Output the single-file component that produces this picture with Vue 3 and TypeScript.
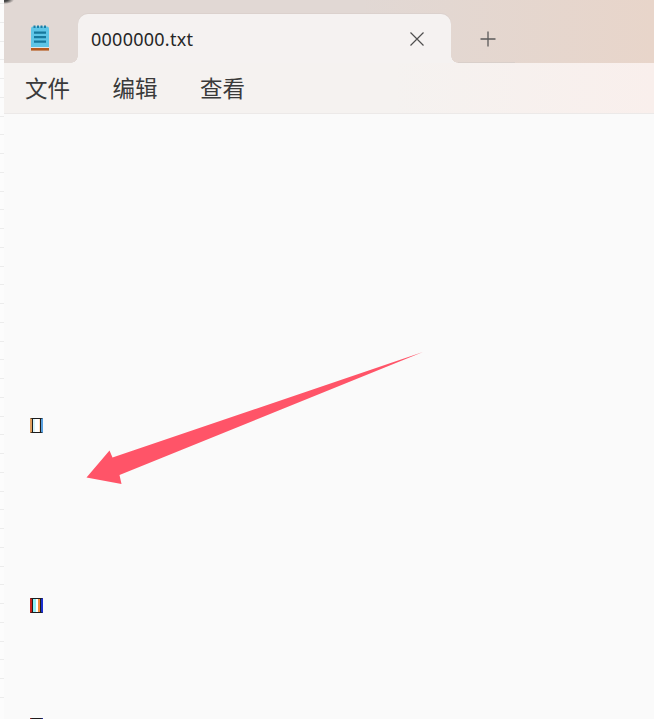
<template>
  <div class="window">
    <div class="ruler">
      <i v-for="n in ticks" :key="n" class="tick"></i>
    </div>
    <div class="main">
      <div class="titlebar">
        <div class="app-cell">
          <svg class="app-icon" width="20" height="26" viewBox="0 0 20 26">
            <path d="M1 3.5q0-2 2-2h14q2 0 2 2V22H1z" fill="#5ec5e6" />
            <rect x="1" y="22" width="18" height="1" fill="#dfe6e8" />
            <rect x="1" y="23" width="18" height="2.6" fill="#b65a1e" />
            <path d="M3.5 .5h2v2.4h-2zM7 .5h2v2.4H7zM10.5 .5h2v2.4h-2zM14 .5h2v2.4h-2z" fill="#1c7ea6" />
            <path d="M4 6.5h12v2.2H4zM4 11h12v2.2H4zM4 15.5h12v2.2H4z" fill="#17789c" />
          </svg>
        </div>
        <div class="tab">
          <span class="tab-title">{{ fileName }}</span>
          <svg class="tab-close" width="16" height="16" viewBox="0 0 16 16">
            <path d="M1.5 1.5l13 13M14.5 1.5l-13 13" stroke="#4f4f4f" stroke-width="1.2" fill="none" />
          </svg>
        </div>
        <div class="tab-rest">
          <svg class="tab-add" width="16" height="16" viewBox="0 0 16 16">
            <path d="M8 .5v15M.5 8h15" stroke="#5a5a5a" stroke-width="1.3" fill="none" />
          </svg>
        </div>
      </div>
      <nav class="menubar">
        <span v-for="item in menus" :key="item" class="menu-item">{{ item }}</span>
      </nav>
      <div class="editor">
        <div v-for="(line, i) in lines" :key="i" class="line" :class="line">
          <span class="tofu"></span>
        </div>
        <svg class="arrow" width="654" height="605" viewBox="0 114 654 605">
          <path d="M423 352 112.5 457.5 109.5 450.5 86.5 477.5 121.5 484 119.5 475Z" fill="#ff5468" />
        </svg>
      </div>
    </div>
  </div>
</template>

<script setup lang="ts">
const fileName = '0000000.txt'
const menus = ['文件', '编辑', '查看']
const lines = ['soft', 'strong', 'strong']
const ticks = Array.from({ length: 38 }, (_, i) => i)
</script>

<style>
html,
body {
  margin: 0;
  height: 100%;
  overflow: hidden;
  background: #fafafa;
}
</style>

<style scoped>
.window {
  display: flex;
  width: 654px;
  height: 719px;
  overflow: hidden;
  font-family: "Noto Sans CJK SC", "Noto Sans", sans-serif;
}

.ruler {
  width: 4px;
  flex: none;
  display: flex;
  flex-direction: column;
  gap: 17.75px;
  padding-top: 3px;
  background: #fcfcfc;
}

.tick {
  display: block;
  height: 1px;
  flex: none;
  background: #ececec;
}

.main {
  flex: 1;
  display: flex;
  flex-direction: column;
  min-width: 0;
}

.titlebar {
  height: 63px;
  flex: none;
  display: flex;
  padding-top: 14px;
  box-sizing: border-box;
  background:
    radial-gradient(ellipse 10px 4px at 0 0, #444 35%, transparent 100%),
    linear-gradient(90deg, #e1d8d4 0, #e1d8d4 55%, #e8d5ca 100%);
}

.app-cell {
  width: 74px;
  flex: none;
  display: flex;
  align-items: center;
  padding-left: 26px;
  box-sizing: border-box;
  padding-bottom: 2px;
}

.tab {
  position: relative;
  width: 373px;
  flex: none;
  display: flex;
  align-items: center;
  justify-content: space-between;
  padding: 0 26px 0 13px;
  box-sizing: border-box;
  background: #f5f2f1;
  border-radius: 10px 10px 0 0;
  box-shadow: 0 -1px 0 #dbd1cd;
}

.tab::before,
.tab::after {
  content: "";
  position: absolute;
  bottom: 0;
  width: 7px;
  height: 7px;
}

.tab::before {
  left: -7px;
  background: radial-gradient(circle at 0 0, transparent 6.5px, #f5f2f1 7px);
}

.tab::after {
  right: -7px;
  background: radial-gradient(circle at 100% 0, transparent 6.5px, #f5f2f1 7px);
}

.tab-title {
  font-family: "Noto Sans", sans-serif;
  font-size: 18px;
  color: #262626;
  letter-spacing: 0.25px;
}

.tab-rest {
  flex: 1;
  display: flex;
  align-items: center;
  padding-left: 29px;
  box-sizing: border-box;
  background: linear-gradient(#d9cfca, #d9cfca) no-repeat 7px 100% / 57px 1px;
}

.menubar {
  height: 51px;
  flex: none;
  display: flex;
  align-items: center;
  gap: 42.5px;
  padding: 0 0 3px 21px;
  box-sizing: border-box;
  background: linear-gradient(90deg, #f5f2f0 60%, #f9efec);
  border-bottom: 1px solid #ece9e8;
}

.menu-item {
  font-size: 22.5px;
  color: #3a3a3a;
}

.editor {
  position: relative;
  flex: 1;
  background: #fafafa;
}

.line {
  height: 180px;
  display: flex;
  align-items: flex-end;
  padding-left: 25.5px;
  box-sizing: border-box;
}

.line:first-child {
  height: 319px;
}

.line:last-of-type {
  height: 120px;
}

.tofu {
  display: block;
  width: 9px;
  height: 13px;
  flex: none;
  border-style: solid;
  border-width: 1.5px 2px;
  border-color: #1c1c1c;
  box-shadow: inset 1px 0 0 #1c1c1c, inset -1px 0 0 #1c1c1c;
  background: linear-gradient(90deg, #d5f4fa 0 30%, #ffffff 30% 75%, #ffe6c8 75%);
}

.soft .tofu {
  border-left-color: #e0a060;
  border-right-color: #58a0e0;
}

.strong .tofu {
  border-left-color: #c8201c;
  border-right-color: #1a2fd0;
  background: linear-gradient(90deg, #90f0f6 0 40%, #ffffff 40% 70%, #f09040 70%);
}

.arrow {
  position: absolute;
  left: -4px;
  top: 0;
  pointer-events: none;
}
</style>
